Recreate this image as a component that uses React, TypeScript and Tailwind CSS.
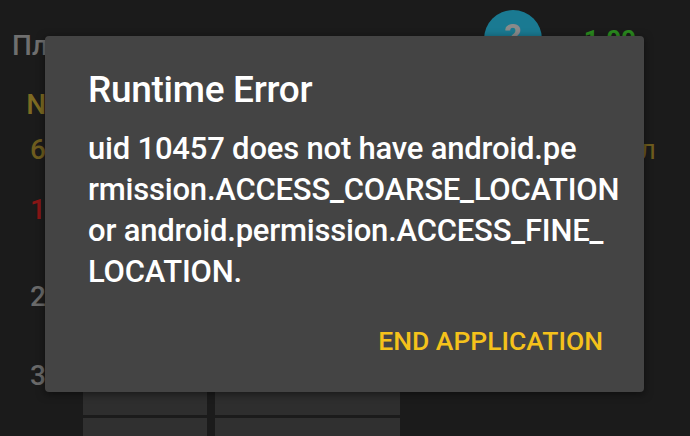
import React from "react";

export default function App() {
  const font = { fontFamily: "Roboto, 'Noto Sans', sans-serif" };
  return (
    <div
      className="relative w-[690px] h-[436px] overflow-hidden bg-[#1b1b1b]"
      style={font}
    >
      {/* background screen (dimmed) */}
      <div className="flex flex-col h-full">
        <div className="flex items-start h-[60px]">
          <div className="pl-[12px] pt-[32px] text-[28px] font-medium leading-none text-[#6f6f6f]">
            Пл
          </div>
          <div className="ml-auto mt-[10px] mr-[54px] flex items-start gap-[42px]">
            <div className="w-[58px] h-[58px] rounded-full bg-[#1a7a92] flex items-start justify-center pt-[9px] text-[34px] font-bold text-[#8a8a8a] leading-none">
              ?
            </div>
            <div className="pt-[17px] text-[26px] font-bold text-[#2a8a1e] leading-none">
              1.00
            </div>
          </div>
        </div>
        <div className="flex">
          <div className="flex flex-col items-end w-[46px] text-[28px] font-medium leading-none">
            <div className="mt-[31px] text-[#7d6a22]">N</div>
            <div className="mt-[17px] text-[#6e5c1e]">6</div>
            <div className="mt-[32px] text-[#8a1616]">1</div>
            <div className="mt-[59px] text-[#6a6a6a]">2</div>
            <div className="mt-[51px] text-[#6a6a6a]">3</div>
          </div>
          <div className="ml-auto mr-[34px] mt-[76px] text-[28px] leading-none text-[#6e5c1e]">
            л
          </div>
        </div>
        <div className="absolute left-[83px] top-[392px] grid grid-cols-[124px_185px] gap-x-[8px] gap-y-[3px]">
          <div className="h-[23px] bg-[#2e2e2e]" />
          <div className="h-[23px] bg-[#2e2e2e]" />
          <div className="h-[30px] bg-[#303030]" />
          <div className="h-[30px] bg-[#303030]" />
        </div>
      </div>

      {/* dialog */}
      <div className="absolute left-[45px] top-[36px] w-[599px] h-[356px] rounded-[4px] bg-[#444444] shadow-[0_2px_8px_rgba(0,0,0,0.5)] pl-[43px] pr-[20px] flex flex-col">
        <div className="mt-[34px] text-[37px] font-medium leading-[40px] text-white tracking-[-0.3px] whitespace-nowrap">
          Runtime Error
        </div>
        <div className="mt-[18px] text-[31px] font-medium leading-[41px] text-white tracking-[-0.2px] whitespace-nowrap">
          <div>uid 10457 does not have android.pe</div>
          <div>rmission.ACCESS_COARSE_LOCATION</div>
          <div>or android.permission.ACCESS_FINE_</div>
          <div>LOCATION.</div>
        </div>
        <div className="mt-auto mb-[38px] flex justify-end pr-[21px]">
          <div className="text-[26.5px] font-medium leading-none text-[#f5c21b] whitespace-nowrap">
            END APPLICATION
          </div>
        </div>
      </div>
    </div>
  );
}
